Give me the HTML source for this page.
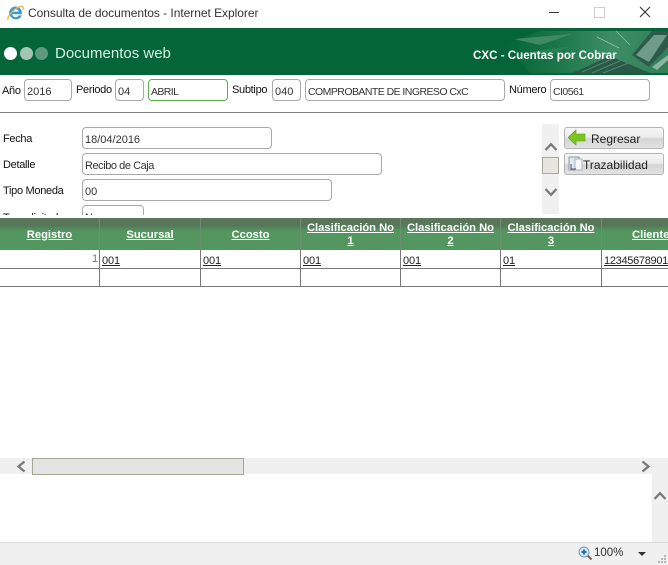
<!DOCTYPE html>
<html><head><meta charset="utf-8"><style>
html,body{margin:0;padding:0;width:668px;height:565px;overflow:hidden;background:#fff}
body{position:relative;font-family:"Liberation Sans",sans-serif;font-size:11px;color:#222}
.a{position:absolute;white-space:nowrap}
.l{position:absolute;white-space:nowrap;font-size:11px;letter-spacing:-.3px;color:#111;line-height:14px}
.i{position:absolute;box-sizing:border-box;height:22px;border:1px solid #a9a9a9;border-radius:4px;background:#fff;padding-left:2px;line-height:24px;font-size:11px;color:#333;white-space:nowrap;overflow:hidden}
.b{position:absolute;box-sizing:border-box;left:564px;width:100px;height:22px;border:1px solid #b5b5b5;border-radius:3px;background:linear-gradient(#f6f6f6,#ececec 45%,#d4d4d4 55%,#e2e2e2);font-size:12px;line-height:23px;color:#222;white-space:nowrap}
.th{position:absolute;top:218px;height:32px;box-sizing:border-box;padding-top:2px;color:#fff;font:bold 11.2px/13px "Liberation Sans",sans-serif;text-align:center;display:flex;align-items:center;justify-content:center}
.th span{display:block;text-decoration:underline}
.td{position:absolute;top:254px;font:11px/14px "Liberation Sans",sans-serif;letter-spacing:-.1px;color:#222;text-decoration:underline;white-space:nowrap}
.v{position:absolute;top:218px;width:1px;background:#6f8f72;height:32px}
.w{position:absolute;top:250px;width:1px;background:#777;height:37px}
</style></head><body>

<!-- title bar -->
<svg class="a" style="left:7px;top:4px" width="18" height="18" viewBox="0 0 18 18">
<path d="M2 9a6.500 6.500 0 0 1 12.600-2.200l.4 3.400H5.200c.3 3.400 5 3.800 6.600 1.200h3c-1.800 5.200-9.600 5.400-12-.2z" fill="#3a9bdc"/>
<path d="M5.300 7.600h6.300c-.4-2.800-5.600-2.900-6.300 0z" fill="#fff"/>
<path d="M1 16c-1-3 4-10 11-13 3-1.500 5-.5 4 2.500" fill="none" stroke="#e8b53a" stroke-width="1.300"/>
</svg>
<div class="a" style="left:28px;top:5px;font:12px/16px 'Liberation Sans',sans-serif;color:#333;letter-spacing:-.04px">Consulta de documentos - Internet Explorer</div>
<div class="a" style="left:549px;top:12px;width:10px;height:1px;background:#333"></div>
<div class="a" style="left:594px;top:7px;width:11px;height:11px;box-sizing:border-box;border:1px solid #ccc"></div>
<svg class="a" style="left:639px;top:6px" width="12" height="12"><path d="M1 1l10 10M11 1L1 11" stroke="#333" stroke-width="1.100"/></svg>

<!-- green header -->
<div class="a" style="left:0;top:28px;width:668px;height:47px;background:#036538;overflow:hidden">
<svg class="a" style="left:500px;top:0" width="168" height="47" viewBox="0 0 168 47">
<defs><linearGradient id="g" x1="0" x2="1" y1="0" y2="0"><stop offset="0" stop-color="#036538"/><stop offset=".3" stop-color="#1a7548"/><stop offset=".65" stop-color="#3d8d66"/><stop offset="1" stop-color="#2f7f58"/></linearGradient></defs>
<path d="M5 16L40 3H168V45H30z" fill="url(#g)"/>
<path d="M14 11L72 6 40 17z" fill="#3f8a63"/>
<path d="M30 24L72 18 48 28z" fill="#2c8056"/>
<path d="M72 45l38-17 40 17z" fill="#2a5a47"/>
<path d="M82 44l32-14M92 45l30-13M103 45l28-11" stroke="#4f8570" stroke-width="1"/>
<path d="M132 27l20-24h16v16l-19 20z" fill="#2e5a49"/>
<path d="M136 27l18-20h13l-18 27z" fill="#6e9c88"/>
<path d="M116 3l14 14M97 9l22 11" stroke="#cfe2d8" stroke-width=".7" opacity=".6"/>
<path d="M152 39l16-12v5l-11 10z" fill="#8fb3a1"/>
</svg>
</div>
<div class="a" style="left:4px;top:47px;width:13px;height:13px;border-radius:50%;background:#fff"></div>
<div class="a" style="left:20px;top:47px;width:13px;height:13px;border-radius:50%;background:#a4c5b2"></div>
<div class="a" style="left:35px;top:47px;width:13px;height:13px;border-radius:50%;background:#5f9a7c"></div>
<div class="a" style="left:55px;top:45px;font:15px/18px 'Liberation Sans',sans-serif;color:#d6efe0">Documentos web</div>
<div class="a" style="left:473px;top:48px;font:bold 11.6px/15px 'Liberation Sans',sans-serif;color:#fff">CXC - Cuentas por Cobrar</div>

<!-- top form row -->
<div class="l" style="left:2px;top:84px">Año</div>
<div class="i" style="left:24px;top:79px;width:48px">2016</div>
<div class="l" style="left:76px;top:83px">Periodo</div>
<div class="i" style="left:115px;top:79px;width:29px">04</div>
<div class="i" style="left:148px;top:79px;width:80px;border-color:#5fb04f;font-size:10.5px;letter-spacing:-.6px">ABRIL</div>
<div class="l" style="left:232px;top:83px">Subtipo</div>
<div class="i" style="left:272px;top:79px;width:29px">040</div>
<div class="i" style="left:305px;top:79px;width:200px;font-size:10.5px;letter-spacing:-.55px">COMPROBANTE DE INGRESO CxC</div>
<div class="l" style="left:509px;top:83px">Número</div>
<div class="i" style="left:550px;top:79px;width:100px;font-size:10.5px;letter-spacing:-.55px">CI0561</div>
<div class="a" style="left:0;top:112px;width:668px;height:1px;background:#808080"></div>

<!-- details -->
<div class="l" style="left:3px;top:132px">Fecha</div>
<div class="i" style="left:82px;top:127px;width:190px">18/04/2016</div>
<div class="l" style="left:3px;top:158px">Detalle</div>
<div class="i" style="left:82px;top:153px;width:300px;letter-spacing:-.45px">Recibo de Caja</div>
<div class="l" style="left:3px;top:184px">Tipo Moneda</div>
<div class="i" style="left:82px;top:179px;width:250px">00</div>
<div class="a" style="left:0;top:205px;width:400px;height:10px;overflow:hidden">
<div class="l" style="left:3px;top:6px">Tasa digitado</div>
<div class="i" style="left:82px;top:0;width:62px">N</div>
</div>

<!-- side scroll -->
<div class="a" style="left:542px;top:124px;width:17px;height:90px;background:#f0f0f0"></div>
<svg class="a" style="left:544px;top:141px" width="14" height="11"><path d="M1.500 9L7 3.200 12.500 9" fill="none" stroke="#7a7a7a" stroke-width="2.300"/></svg>
<div class="a" style="left:542px;top:157px;width:17px;height:17px;box-sizing:border-box;border:1px solid #a8a89a;background:#e6e6de"></div>
<svg class="a" style="left:544px;top:187px" width="14" height="11"><path d="M1.500 2L7 7.800 12.500 2" fill="none" stroke="#7a7a7a" stroke-width="2.300"/></svg>

<!-- buttons -->
<div class="b" style="top:127px"><span class="a" style="left:26px;top:0">Regresar</span>
<svg class="a" style="left:3px;top:1px" width="18" height="17" viewBox="0 0 18 17"><path d="M0 8.500L8 1v4h9v7H8v4z" fill="#7cc51f" stroke="#5a9e12" stroke-width=".6"/></svg></div>
<div class="b" style="top:153px"><span class="a" style="left:18px;top:0">Trazabilidad</span>
<svg class="a" style="left:3px;top:2px" width="16" height="16" viewBox="0 0 16 16"><rect x="1" y="1" width="10" height="13" fill="#dfe6ee" stroke="#8c9aa8"/><rect x="7" y="3" width="7" height="11" fill="#f6f8fa" stroke="#a8b4c0"/><path d="M3 8v5h5" fill="none" stroke="#556"/></svg></div>

<!-- table header -->
<div class="a" style="left:0;top:218px;width:668px;height:32px;background:linear-gradient(#58775a,#58775a 24%,#53965f 40%,#53965f)"></div>
<div class="v" style="left:99px"></div><div class="v" style="left:200px"></div><div class="v" style="left:300px"></div><div class="v" style="left:400px"></div><div class="v" style="left:500px"></div><div class="v" style="left:601px"></div>
<div class="th" style="left:0;width:99px"><span>Registro</span></div>
<div class="th" style="left:100px;width:100px"><span>Sucursal</span></div>
<div class="th" style="left:201px;width:99px"><span>Ccosto</span></div>
<div class="th" style="left:301px;width:99px"><span>Clasificación No<br>1</span></div>
<div class="th" style="left:401px;width:99px"><span>Clasificación No<br>2</span></div>
<div class="th" style="left:501px;width:100px"><span>Clasificación No<br>3</span></div>
<div class="a th" style="left:632px;width:60px;justify-content:flex-start"><span>Cliente</span></div>

<!-- table body -->
<div class="a" style="left:0;top:268px;width:668px;height:1px;background:#777"></div>
<div class="a" style="left:0;top:286px;width:668px;height:1px;background:#777"></div>
<div class="w" style="left:99px"></div><div class="w" style="left:200px"></div><div class="w" style="left:300px"></div><div class="w" style="left:400px"></div><div class="w" style="left:500px"></div><div class="w" style="left:601px"></div>
<div class="a" style="left:92px;top:252px;font:11px/14px 'Liberation Sans',sans-serif;color:#777">1</div>
<div class="td" style="left:102px">001</div>
<div class="td" style="left:203px">001</div>
<div class="td" style="left:303px">001</div>
<div class="td" style="left:403px">001</div>
<div class="td" style="left:503px">01</div>
<div class="td" style="left:604px;letter-spacing:-.3px">12345678901</div>

<!-- horizontal scroll -->
<div class="a" style="left:0;top:458px;width:668px;height:16px;background:#f0f0f0"></div>
<svg class="a" style="left:15px;top:460px" width="12" height="13"><path d="M9.500 1.500L3.500 6.500l6 5" fill="none" stroke="#7a7a7a" stroke-width="2.300"/></svg>
<div class="a" style="left:32px;top:458px;width:212px;height:17px;box-sizing:border-box;border:1px solid #a5a597;background:#e4e4e2"></div>
<svg class="a" style="left:640px;top:460px" width="12" height="13"><path d="M2.500 1.500l6 5-6 5" fill="none" stroke="#7a7a7a" stroke-width="2.300"/></svg>

<!-- vertical scroll bottom -->
<div class="a" style="left:652px;top:474px;width:16px;height:68px;background:#f0f0f0"></div>
<svg class="a" style="left:653px;top:490px" width="14" height="11"><path d="M1.500 9L7 3.200 12.500 9" fill="none" stroke="#7a7a7a" stroke-width="2.300"/></svg>

<!-- status bar -->
<div class="a" style="left:0;top:542px;width:668px;height:23px;box-sizing:border-box;border-top:1px solid #dadada;background:#f0f0f0"></div>
<svg class="a" style="left:578px;top:546px" width="15" height="15" viewBox="0 0 15 15"><path d="M8.500 8.500L13.500 13.500" stroke="#8a5a3a" stroke-width="2"/><circle cx="6" cy="6" r="5" fill="#d6e6f4" stroke="#7a9cbc"/><path d="M3.500 6h5M6 3.500v5" stroke="#1a62b4" stroke-width="1.800"/></svg>
<div class="a" style="left:594px;top:546px;font:11.5px/15px 'Liberation Sans',sans-serif;color:#333">100%</div>
<div class="a" style="left:638px;top:552px;width:0;height:0;border-left:4px solid transparent;border-right:4px solid transparent;border-top:4px solid #333"></div>
<svg class="a" style="left:657px;top:554px" width="10" height="10" fill="#b5b5b5"><rect x="7" y="1" width="2" height="2"/><rect x="4" y="4" width="2" height="2"/><rect x="7" y="4" width="2" height="2"/><rect x="1" y="7" width="2" height="2"/><rect x="4" y="7" width="2" height="2"/><rect x="7" y="7" width="2" height="2"/></svg>

</body></html>
